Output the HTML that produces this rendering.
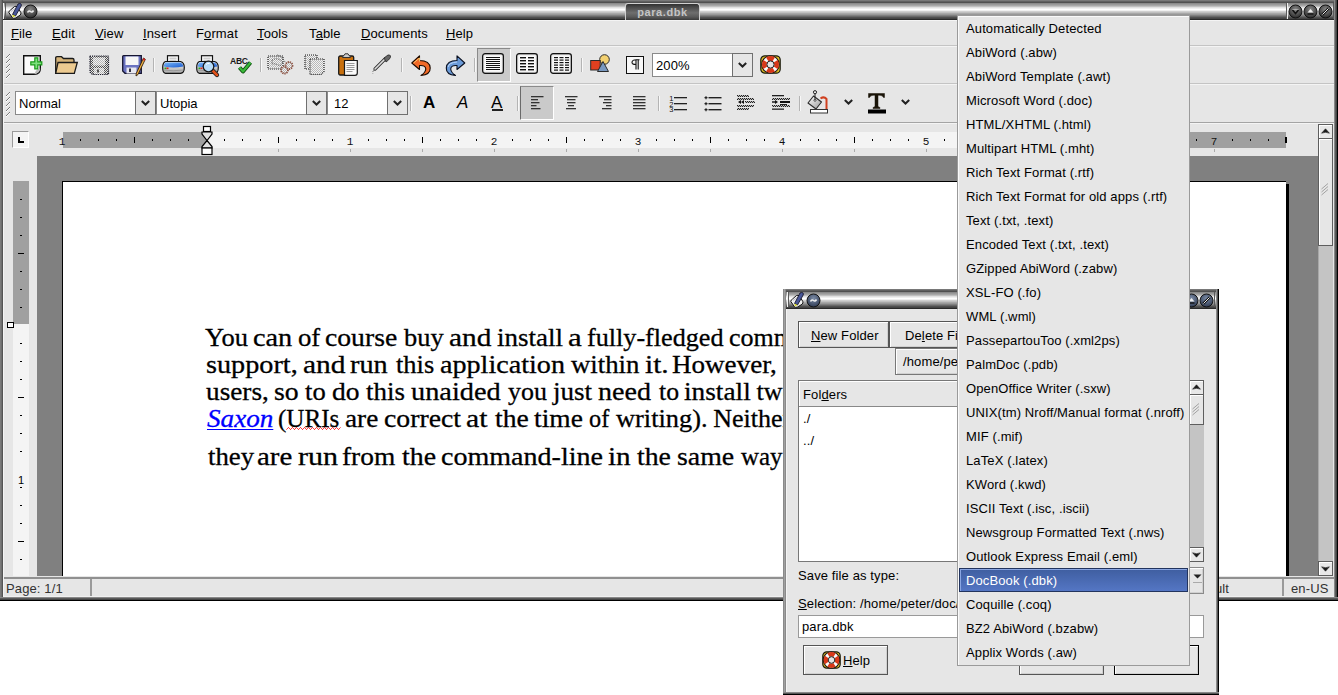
<!DOCTYPE html>
<html><head><meta charset="utf-8">
<style>
*{box-sizing:border-box}
html,body{margin:0;padding:0}
body{width:1338px;height:695px;background:#fff;position:relative;overflow:hidden;font-family:"Liberation Sans",sans-serif;font-size:13px;color:#000}
.a{position:absolute}
.t{white-space:nowrap;line-height:15px;letter-spacing:0.12px}
.u{text-decoration:underline;text-underline-offset:1px;text-decoration-thickness:1px}
.dw{position:absolute;white-space:nowrap;font-family:"Liberation Serif",serif;font-size:26px;line-height:30px;-webkit-text-stroke:0.3px currentColor}
svg{overflow:visible}
</style></head><body>

<div class="a" style="left:0px;top:0px;width:1338px;height:600px;background:#e6e6e6"></div>
<div class="a" style="left:0px;top:0px;width:1338px;height:20px;background:linear-gradient(to bottom,#787878 0.5px,#606060 1.5px,#505050 2.5px,#8a8a8a 3.5px,#9a9a9a 4.5px,#a8a8a8 5.5px,#c0c0c0 6.5px,#e0e0e0 7.5px,#f0f0f0 8.5px,#fff 9.5px,#f0f0f0 10.5px,#d0d0d0 11.5px,#c0c0c0 12.5px,#a8a8a8 13.5px,#989898 14.5px,#808080 15.5px,#686868 16.5px,#505050 17.5px,#444 18.5px,#2a2a2a 19.5px)"></div>
<div class="a" style="left:3px;top:3px;width:1px;height:16px;background:#f4f4f4"></div>
<div class="a" style="left:5px;top:3px;width:1px;height:16px;background:#5a5a5a"></div>
<svg class="a" style="left:8px;top:3px;" width="14" height="16" viewBox="0 0 14 16"><path d="M0.8 9.5 Q0.8 8 2.5 7 L6.5 3.5 Q8 2.8 9.5 4 L12.8 9.5 Q13.5 11 12 12.3 L7.5 15 Q5.5 16 4.3 14.5 Z" fill="#f0f0f0" stroke="#111" stroke-width="1"/>
<path d="M3 8.5 L7 5.5" stroke="#aab" stroke-width="0.7"/>
<path d="M4.5 11.5 L10 1 Q11.5 0 12.8 0.8 Q13.8 1.8 13.2 3 L7.5 13 Z" fill="#4a5898" stroke="#0a0a20" stroke-width="0.8"/>
<path d="M4.5 11.5 L7.5 13 L4.8 14.5 Z" fill="#d8d820"/></svg>
<svg class="a" style="left:23px;top:4px;" width="15" height="15" viewBox="0 0 15 15"><defs><radialGradient id="g3011" cx="0.5" cy="0.35" r="0.65"><stop offset="0" stop-color="#8a8a8a"/><stop offset="1" stop-color="#2a2a2a"/></radialGradient></defs><circle cx="7.5" cy="7.5" r="6.5" fill="url(#g3011)" stroke="#111" stroke-width="1"/><path d="M4.5 8.5 Q6 6 7.5 7.5 Q9 9 10.5 6.5" fill="none" stroke="#eee" stroke-width="1.6"/></svg>
<div class="a" style="left:625px;top:3px;width:75px;height:17px;border:1px solid #d0d0d0;border-bottom:none;border-radius:3px 3px 0 0;background:linear-gradient(to bottom,#303030,#4a4a4a 20%,#6e6e6e 55%,#5a5a5a 80%,#3a3a3a)"></div>
<div class="a" style="left:625px;top:5px;width:75px;text-align:center;color:#c4c4c4;font-weight:bold;font-size:11px;line-height:15px;letter-spacing:0.6px">para.dbk</div>
<div class="a" style="left:1286px;top:3px;width:1px;height:16px;background:#5a5a5a"></div>
<div class="a" style="left:1287px;top:3px;width:1px;height:16px;background:#f0f0f0"></div>
<div class="a" style="left:1333px;top:3px;width:1px;height:16px;background:#5a5a5a"></div>
<svg class="a" style="left:1288px;top:4px;" width="15" height="15" viewBox="0 0 15 15"><defs><radialGradient id="g129511" cx="0.5" cy="0.35" r="0.65"><stop offset="0" stop-color="#8a8a8a"/><stop offset="1" stop-color="#2a2a2a"/></radialGradient></defs><circle cx="7.5" cy="7.5" r="6.5" fill="url(#g129511)" stroke="#111" stroke-width="1"/><path d="M4.5 6 L7.5 9.5 L10.5 6" fill="none" stroke="#111" stroke-width="1.6"/><path d="M4.5 5.5 L10.5 5.5" stroke="#ccc" stroke-width="0.6"/></svg>
<svg class="a" style="left:1303px;top:4px;" width="15" height="15" viewBox="0 0 15 15"><defs><radialGradient id="g131011" cx="0.5" cy="0.35" r="0.65"><stop offset="0" stop-color="#8a8a8a"/><stop offset="1" stop-color="#2a2a2a"/></radialGradient></defs><circle cx="7.5" cy="7.5" r="6.5" fill="url(#g131011)" stroke="#111" stroke-width="1"/><path d="M4.5 8.5 L7.5 5 L10.5 8.5 Z" fill="#eee"/><path d="M4.5 10 L10.5 10" stroke="#111" stroke-width="1.4"/></svg>
<svg class="a" style="left:1318px;top:4px;" width="15" height="15" viewBox="0 0 15 15"><defs><radialGradient id="g132511" cx="0.5" cy="0.35" r="0.65"><stop offset="0" stop-color="#8a8a8a"/><stop offset="1" stop-color="#2a2a2a"/></radialGradient></defs><circle cx="7.5" cy="7.5" r="6.5" fill="url(#g132511)" stroke="#111" stroke-width="1"/><path d="M4.3 10.7 L10.7 4.3" stroke="#111" stroke-width="2.4"/><path d="M4.5 10.5 L10.5 4.5" stroke="#eee" stroke-width="1"/></svg>
<div class="a" style="left:3px;top:20px;width:1331px;height:1px;background:#f4f4f4"></div>
<div class="a" style="left:3px;top:45px;width:1331px;height:1px;background:#c4c4c4"></div>
<div class="a" style="left:3px;top:46px;width:1331px;height:1px;background:#f4f4f4"></div>
<div class="a t" style="left:11px;top:26px;"><span class="u">F</span>ile</div>
<div class="a t" style="left:52px;top:26px;"><span class="u">E</span>dit</div>
<div class="a t" style="left:95px;top:26px;"><span class="u">V</span>iew</div>
<div class="a t" style="left:143px;top:26px;"><span class="u">I</span>nsert</div>
<div class="a t" style="left:196px;top:26px;">F<span class="u">o</span>rmat</div>
<div class="a t" style="left:257px;top:26px;"><span class="u">T</span>ools</div>
<div class="a t" style="left:309px;top:26px;">T<span class="u">a</span>ble</div>
<div class="a t" style="left:361px;top:26px;"><span class="u">D</span>ocuments</div>
<div class="a t" style="left:446px;top:26px;"><span class="u">H</span>elp</div>
<div class="a" style="left:3px;top:83px;width:1331px;height:1px;background:#c4c4c4"></div>
<div class="a" style="left:3px;top:84px;width:1331px;height:1px;background:#f4f4f4"></div>
<div class="a" style="left:3px;top:122px;width:1331px;height:1px;background:#a4a4a4"></div>
<div class="a" style="left:3px;top:123px;width:1331px;height:1px;background:#f4f4f4"></div>
<svg class="a" style="left:6px;top:54px;" width="4" height="25" viewBox="0 0 4 25"><rect x="3" y="0" width="1" height="1" transform="translate(0,0)" fill="#7a7a7a"/><rect x="3" y="1" width="1" height="1" transform="translate(0,0)" fill="#fff"/><rect x="2" y="1" width="1" height="1" transform="translate(0,0)" fill="#7a7a7a"/><rect x="2" y="2" width="1" height="1" transform="translate(0,0)" fill="#fff"/><rect x="1" y="2" width="1" height="1" transform="translate(0,0)" fill="#7a7a7a"/><rect x="1" y="3" width="1" height="1" transform="translate(0,0)" fill="#fff"/><rect x="0" y="3" width="1" height="1" transform="translate(0,0)" fill="#7a7a7a"/><rect x="0" y="4" width="1" height="1" transform="translate(0,0)" fill="#fff"/><rect x="3" y="0" width="1" height="1" transform="translate(0,5)" fill="#7a7a7a"/><rect x="3" y="1" width="1" height="1" transform="translate(0,5)" fill="#fff"/><rect x="2" y="1" width="1" height="1" transform="translate(0,5)" fill="#7a7a7a"/><rect x="2" y="2" width="1" height="1" transform="translate(0,5)" fill="#fff"/><rect x="1" y="2" width="1" height="1" transform="translate(0,5)" fill="#7a7a7a"/><rect x="1" y="3" width="1" height="1" transform="translate(0,5)" fill="#fff"/><rect x="0" y="3" width="1" height="1" transform="translate(0,5)" fill="#7a7a7a"/><rect x="0" y="4" width="1" height="1" transform="translate(0,5)" fill="#fff"/><rect x="3" y="0" width="1" height="1" transform="translate(0,10)" fill="#7a7a7a"/><rect x="3" y="1" width="1" height="1" transform="translate(0,10)" fill="#fff"/><rect x="2" y="1" width="1" height="1" transform="translate(0,10)" fill="#7a7a7a"/><rect x="2" y="2" width="1" height="1" transform="translate(0,10)" fill="#fff"/><rect x="1" y="2" width="1" height="1" transform="translate(0,10)" fill="#7a7a7a"/><rect x="1" y="3" width="1" height="1" transform="translate(0,10)" fill="#fff"/><rect x="0" y="3" width="1" height="1" transform="translate(0,10)" fill="#7a7a7a"/><rect x="0" y="4" width="1" height="1" transform="translate(0,10)" fill="#fff"/><rect x="3" y="0" width="1" height="1" transform="translate(0,15)" fill="#7a7a7a"/><rect x="3" y="1" width="1" height="1" transform="translate(0,15)" fill="#fff"/><rect x="2" y="1" width="1" height="1" transform="translate(0,15)" fill="#7a7a7a"/><rect x="2" y="2" width="1" height="1" transform="translate(0,15)" fill="#fff"/><rect x="1" y="2" width="1" height="1" transform="translate(0,15)" fill="#7a7a7a"/><rect x="1" y="3" width="1" height="1" transform="translate(0,15)" fill="#fff"/><rect x="0" y="3" width="1" height="1" transform="translate(0,15)" fill="#7a7a7a"/><rect x="0" y="4" width="1" height="1" transform="translate(0,15)" fill="#fff"/><rect x="3" y="0" width="1" height="1" transform="translate(0,20)" fill="#7a7a7a"/><rect x="3" y="1" width="1" height="1" transform="translate(0,20)" fill="#fff"/><rect x="2" y="1" width="1" height="1" transform="translate(0,20)" fill="#7a7a7a"/><rect x="2" y="2" width="1" height="1" transform="translate(0,20)" fill="#fff"/><rect x="1" y="2" width="1" height="1" transform="translate(0,20)" fill="#7a7a7a"/><rect x="1" y="3" width="1" height="1" transform="translate(0,20)" fill="#fff"/><rect x="0" y="3" width="1" height="1" transform="translate(0,20)" fill="#7a7a7a"/><rect x="0" y="4" width="1" height="1" transform="translate(0,20)" fill="#fff"/></svg>
<svg class="a" style="left:6px;top:92px;" width="4" height="25" viewBox="0 0 4 25"><rect x="3" y="0" width="1" height="1" transform="translate(0,0)" fill="#7a7a7a"/><rect x="3" y="1" width="1" height="1" transform="translate(0,0)" fill="#fff"/><rect x="2" y="1" width="1" height="1" transform="translate(0,0)" fill="#7a7a7a"/><rect x="2" y="2" width="1" height="1" transform="translate(0,0)" fill="#fff"/><rect x="1" y="2" width="1" height="1" transform="translate(0,0)" fill="#7a7a7a"/><rect x="1" y="3" width="1" height="1" transform="translate(0,0)" fill="#fff"/><rect x="0" y="3" width="1" height="1" transform="translate(0,0)" fill="#7a7a7a"/><rect x="0" y="4" width="1" height="1" transform="translate(0,0)" fill="#fff"/><rect x="3" y="0" width="1" height="1" transform="translate(0,5)" fill="#7a7a7a"/><rect x="3" y="1" width="1" height="1" transform="translate(0,5)" fill="#fff"/><rect x="2" y="1" width="1" height="1" transform="translate(0,5)" fill="#7a7a7a"/><rect x="2" y="2" width="1" height="1" transform="translate(0,5)" fill="#fff"/><rect x="1" y="2" width="1" height="1" transform="translate(0,5)" fill="#7a7a7a"/><rect x="1" y="3" width="1" height="1" transform="translate(0,5)" fill="#fff"/><rect x="0" y="3" width="1" height="1" transform="translate(0,5)" fill="#7a7a7a"/><rect x="0" y="4" width="1" height="1" transform="translate(0,5)" fill="#fff"/><rect x="3" y="0" width="1" height="1" transform="translate(0,10)" fill="#7a7a7a"/><rect x="3" y="1" width="1" height="1" transform="translate(0,10)" fill="#fff"/><rect x="2" y="1" width="1" height="1" transform="translate(0,10)" fill="#7a7a7a"/><rect x="2" y="2" width="1" height="1" transform="translate(0,10)" fill="#fff"/><rect x="1" y="2" width="1" height="1" transform="translate(0,10)" fill="#7a7a7a"/><rect x="1" y="3" width="1" height="1" transform="translate(0,10)" fill="#fff"/><rect x="0" y="3" width="1" height="1" transform="translate(0,10)" fill="#7a7a7a"/><rect x="0" y="4" width="1" height="1" transform="translate(0,10)" fill="#fff"/><rect x="3" y="0" width="1" height="1" transform="translate(0,15)" fill="#7a7a7a"/><rect x="3" y="1" width="1" height="1" transform="translate(0,15)" fill="#fff"/><rect x="2" y="1" width="1" height="1" transform="translate(0,15)" fill="#7a7a7a"/><rect x="2" y="2" width="1" height="1" transform="translate(0,15)" fill="#fff"/><rect x="1" y="2" width="1" height="1" transform="translate(0,15)" fill="#7a7a7a"/><rect x="1" y="3" width="1" height="1" transform="translate(0,15)" fill="#fff"/><rect x="0" y="3" width="1" height="1" transform="translate(0,15)" fill="#7a7a7a"/><rect x="0" y="4" width="1" height="1" transform="translate(0,15)" fill="#fff"/><rect x="3" y="0" width="1" height="1" transform="translate(0,20)" fill="#7a7a7a"/><rect x="3" y="1" width="1" height="1" transform="translate(0,20)" fill="#fff"/><rect x="2" y="1" width="1" height="1" transform="translate(0,20)" fill="#7a7a7a"/><rect x="2" y="2" width="1" height="1" transform="translate(0,20)" fill="#fff"/><rect x="1" y="2" width="1" height="1" transform="translate(0,20)" fill="#7a7a7a"/><rect x="1" y="3" width="1" height="1" transform="translate(0,20)" fill="#fff"/><rect x="0" y="3" width="1" height="1" transform="translate(0,20)" fill="#7a7a7a"/><rect x="0" y="4" width="1" height="1" transform="translate(0,20)" fill="#fff"/></svg>
<svg class="a" style="left:0;top:0" width="0" height="0"><defs><pattern id="dith" width="2" height="2" patternUnits="userSpaceOnUse"><rect width="1" height="1" fill="#3a3a50"/><rect x="1" y="1" width="1" height="1" fill="#3a3a50"/><rect x="1" width="1" height="1" fill="#f0f0f0"/><rect y="1" width="1" height="1" fill="#f0f0f0"/></pattern><pattern id="dith2" width="2" height="2" patternUnits="userSpaceOnUse"><rect width="1" height="1" fill="#505050"/><rect x="1" y="1" width="1" height="1" fill="#505050"/><rect x="1" width="1" height="1" fill="#e8e8e8"/><rect y="1" width="1" height="1" fill="#e8e8e8"/></pattern><pattern id="dk" width="2" height="2" patternUnits="userSpaceOnUse"><rect width="1" height="1" fill="#222"/><rect x="1" y="1" width="1" height="1" fill="#222"/><rect x="1" width="1" height="1" fill="#bbb"/><rect y="1" width="1" height="1" fill="#bbb"/></pattern><pattern id="dl" width="2" height="2" patternUnits="userSpaceOnUse"><rect width="2" height="2" fill="#f2f2f2"/><rect width="1" height="1" fill="#b8b8b8"/><rect x="1" y="1" width="1" height="1" fill="#b8b8b8"/></pattern></defs></svg>
<svg class="a" style="left:23px;top:55px;" width="20" height="20" viewBox="0 0 20 20"><path d="M0.7 0.7 H17.3 V13.5 Q17.3 19.3 11.5 19.3 H0.7 Z" fill="#fbfbfb" stroke="#111" stroke-width="1.4"/>
<path d="M17.3 13.5 Q13 13.8 11.5 19.3 Q16.5 18 17.3 13.5Z" fill="#bdbdbd"/>
<path d="M11.8 2.8 h3 v4 h4 v3 h-4 v4 h-3 v-4 h-4 v-3 h4 Z" fill="#7ee07e" stroke="#1a9a1a" stroke-width="1.2"/></svg>
<svg class="a" style="left:55px;top:56px;" width="23" height="18" viewBox="0 0 23 18"><path d="M0.7 2 Q0.7 0.7 2 0.7 H6.5 L8.5 2.5 H17.5 Q19 2.5 19 4 V17.3 H0.7 Z" fill="#d6b47a" stroke="#1a1a1a" stroke-width="1.3"/>
<path d="M3 6.5 H22.3 L19.3 17.3 H0.7 Z" fill="#ecca90" stroke="#1a1a1a" stroke-width="1.3"/></svg>
<svg class="a" style="left:89px;top:55px;" width="21" height="20" viewBox="0 0 21 20"><path d="M1 1.5 Q1 1 1.5 1 H19 Q19.5 1 19.5 1.5 V19 Q19.5 19.5 19 19.5 H3.5 L1 17 Z" fill="url(#dith2)" stroke="#1a1a2a" stroke-width="1.2" stroke-dasharray="1.2 1"/><rect x="4" y="2.5" width="12" height="8" fill="url(#dl)"/><rect x="5" y="13" width="10" height="6" fill="url(#dl)"/><rect x="8" y="14.5" width="2" height="3" fill="#555"/></svg>
<svg class="a" style="left:122px;top:55px;" width="24" height="22" viewBox="0 0 24 22"><path d="M0.7 1.5 Q0.7 0.7 1.5 0.7 H19.3 V18.3 H3 L0.7 16 Z" fill="#6a72c0" stroke="#151530" stroke-width="1.3"/>
<rect x="3.5" y="1.5" width="13" height="8.5" fill="#f6f6f6"/>
<rect x="4.5" y="12.5" width="10" height="6" fill="#e8e8f0"/><rect x="7" y="13.5" width="2" height="3.5" fill="#334"/>
<path d="M21.5 3 L23.3 4.3 L16 19.5 L14 21 L14.3 18.3 Z" fill="#f0b040" stroke="#302010" stroke-width="0.9"/>
<path d="M21.5 3 L23.3 4.3 L22.5 6 L20.6 4.8Z" fill="#d02020"/></svg>
<div class="a" style="left:153px;top:58px;width:1px;height:14px;background:#b4b4b4"></div>
<div class="a" style="left:154px;top:58px;width:1px;height:14px;background:#f8f8f8"></div>
<svg class="a" style="left:162px;top:55px;" width="23" height="19" viewBox="0 0 23 19"><defs><linearGradient id="pb" x1="0" y1="0" x2="0" y2="1"><stop offset="0" stop-color="#f4f4f4"/><stop offset="1" stop-color="#a8a8a8"/></linearGradient><linearGradient id="pbl" x1="0" y1="0" x2="1" y2="1"><stop offset="0" stop-color="#7ab8f8"/><stop offset="1" stop-color="#1a5ad0"/></linearGradient></defs><rect x="5.5" y="0.7" width="11" height="8" fill="#fafafa" stroke="#111" stroke-width="1.2"/><path d="M7.5 3.2 h7 M7.5 5.2 h7" stroke="#aaa" stroke-width="0.8"/><path d="M3.5 6.5 H18.5 Q22.3 7.5 22.3 12.5 Q22.3 18.3 18.5 18.3 H3.5 Q0.7 18.3 0.7 12.5 Q0.7 7.5 3.5 6.5 Z" fill="url(#pb)" stroke="#111" stroke-width="1.2"/><path d="M3.5 7.5 H18.5 Q21 8.5 21.3 11.5 Q11 13.5 1.7 11.5 Q2 8.5 3.5 7.5Z" fill="url(#pbl)"/><path d="M1.5 15 Q11 16.5 21.5 15" stroke="#888" stroke-width="0.7" fill="none"/><rect x="2.5" y="12.5" width="2" height="1.6" fill="#2a2"/><rect x="4.5" y="12.5" width="2" height="1.6" fill="#d22"/></svg>
<svg class="a" style="left:196px;top:55px;" width="24" height="22" viewBox="0 0 24 22"><rect x="5.5" y="0.7" width="11" height="8" fill="#fafafa" stroke="#111" stroke-width="1.2"/><path d="M7.5 3.2 h7 M7.5 5.2 h7" stroke="#aaa" stroke-width="0.8"/><path d="M3.5 6.5 H18.5 Q22.3 7.5 22.3 12.5 Q22.3 18.3 18.5 18.3 H3.5 Q0.7 18.3 0.7 12.5 Q0.7 7.5 3.5 6.5 Z" fill="url(#pb)" stroke="#111" stroke-width="1.2"/><path d="M3.5 7.5 H18.5 Q21 8.5 21.3 11.5 Q11 13.5 1.7 11.5 Q2 8.5 3.5 7.5Z" fill="url(#pbl)"/><path d="M1.5 15 Q11 16.5 21.5 15" stroke="#888" stroke-width="0.7" fill="none"/><rect x="2.5" y="12.5" width="2" height="1.6" fill="#2a2"/><rect x="4.5" y="12.5" width="2" height="1.6" fill="#d22"/><path d="M15.5 14.5 L21 20" stroke="#1a1a1a" stroke-width="4.2" stroke-linecap="round"/><path d="M15.5 14.5 L21 20" stroke="#e05018" stroke-width="2.6" stroke-linecap="round"/><circle cx="12.5" cy="11.5" r="5.3" fill="#b8dcf8" stroke="#1a1a1a" stroke-width="1.3"/><path d="M10 9.5 Q11.5 8 13.5 8.5" stroke="#fff" stroke-width="1" fill="none"/></svg>
<svg class="a" style="left:230px;top:56px;" width="18" height="9" viewBox="0 0 18 9"><text x="0" y="7.5" font-family="Liberation Sans" font-size="8.6" font-weight="bold" letter-spacing="-0.3" fill="#1a1a1a">ABC</text></svg>
<svg class="a" style="left:238px;top:61px;" width="14" height="13" viewBox="0 0 14 13"><path d="M1.5 6.5 L5 10.5 L12.5 1.5" fill="none" stroke="#0a4a0a" stroke-width="4" stroke-linejoin="round"/><path d="M1.5 6.5 L5 10.5 L12.5 1.5" fill="none" stroke="#3ab83a" stroke-width="2.2" stroke-linejoin="round"/></svg>
<div class="a" style="left:260px;top:58px;width:1px;height:14px;background:#b4b4b4"></div>
<div class="a" style="left:261px;top:58px;width:1px;height:14px;background:#f8f8f8"></div>
<svg class="a" style="left:267px;top:54px;" width="26" height="21" viewBox="0 0 26 21"><rect x="1" y="2" width="15" height="13" fill="url(#dl)" stroke="#222" stroke-width="1.2" stroke-dasharray="1 1"/><path d="M5 6 Q11 3 16 8 L13 12 Q8 9 5 10Z" fill="url(#dl)" stroke="#444" stroke-width="0.9" stroke-dasharray="1 1"/><path d="M10 1 Q15 2 18 8" fill="none" stroke="#555" stroke-width="1" stroke-dasharray="1 1"/><circle cx="17.5" cy="16" r="3.5" fill="url(#dl)" stroke="#8a5040" stroke-width="1.8" stroke-dasharray="1.3 0.8"/><circle cx="22" cy="11.5" r="3.5" fill="url(#dl)" stroke="#8a5040" stroke-width="1.8" stroke-dasharray="1.3 0.8"/></svg>
<svg class="a" style="left:304px;top:54px;" width="21" height="21" viewBox="0 0 21 21"><rect x="1" y="1" width="12" height="14" fill="url(#dl)" stroke="#222" stroke-width="1.2" stroke-dasharray="1 1"/><path d="M6 5 H20 V17.5 L17 20.5 H6 Z" fill="url(#dl)" stroke="#222" stroke-width="1.2" stroke-dasharray="1 1"/></svg>
<svg class="a" style="left:338px;top:53px;" width="21" height="24" viewBox="0 0 21 24"><rect x="0.7" y="3" width="15" height="19" rx="1.5" fill="#c8700e" stroke="#1a1a1a" stroke-width="1.3"/>
<path d="M4.5 4.5 Q4.5 2.5 6 2.5 L7 0.8 H10 L11 2.5 Q12.5 2.5 12.5 4.5 Z" fill="#ccc" stroke="#333" stroke-width="1"/>
<path d="M6.5 7.5 H19.3 V20 Q19.3 22.3 17 22.3 H6.5 Z" fill="#fafafa" stroke="#1a1a1a" stroke-width="1.2"/>
<rect x="8.5" y="10" width="8" height="1" fill="#9a9a9a"/><rect x="8.5" y="12" width="8" height="1" fill="#9a9a9a"/><rect x="8.5" y="14" width="8" height="1" fill="#9a9a9a"/><rect x="8.5" y="16" width="8" height="1" fill="#9a9a9a"/><rect x="8.5" y="18" width="6" height="1" fill="#9a9a9a"/></svg>
<svg class="a" style="left:372px;top:54px;" width="20" height="21" viewBox="0 0 20 21"><path d="M3 15 L13 5" stroke="#333" stroke-width="3.2" stroke-linecap="round"/>
<path d="M3 15 L13 5" stroke="#ddd" stroke-width="1.6" stroke-linecap="round"/>
<path d="M12 4 L16 1 Q18 0.5 18.5 2 Q19 3.5 16.5 6 L14 8Z" fill="#666" stroke="#222" stroke-width="0.8"/>
<path d="M1 17 L3 15 M1 17 L0.8 19.5" stroke="#777" stroke-width="1" stroke-dasharray="1 1"/></svg>
<div class="a" style="left:401px;top:58px;width:1px;height:14px;background:#b4b4b4"></div>
<div class="a" style="left:402px;top:58px;width:1px;height:14px;background:#f8f8f8"></div>
<svg class="a" style="left:411px;top:55px;" width="20" height="22" viewBox="0 0 20 22"><path d="M8.5 0.8 L0.8 8 L8.5 14.5 V10.5 Q14.5 10 14.8 14 Q14.5 17.5 10 20.5 Q19.5 19.5 19.2 13 Q18.8 5.5 8.5 5.5 Z" fill="#f26a28" stroke="#1a0a00" stroke-width="1.1" stroke-linejoin="round"/>
<path d="M2.5 8 L8.5 3 V6.5" fill="none" stroke="#ffd070" stroke-width="0.9"/></svg>
<svg class="a" style="left:445px;top:55px;" width="21" height="22" viewBox="0 0 21 22"><path d="M12 0.8 L19.8 8 L12 14.5 V10.5 Q6 10 5.7 14 Q6 17.5 10.5 20.5 Q1 19.5 1.3 13 Q1.7 5.5 12 5.5 Z" fill="#6a9ad8" stroke="#0a1020" stroke-width="1.1" stroke-linejoin="round"/>
<path d="M3 12 Q4 7.5 12 7" fill="none" stroke="#c8e0ff" stroke-width="0.9"/></svg>
<div class="a" style="left:474px;top:58px;width:1px;height:14px;background:#b4b4b4"></div>
<div class="a" style="left:475px;top:58px;width:1px;height:14px;background:#f8f8f8"></div>
<div class="a" style="left:477px;top:48px;width:34px;height:34px;background:#cacaca;border:1px solid;border-color:#8a8a8a #fff #fff #8a8a8a"></div>
<svg class="a" style="left:482px;top:53px;" width="22" height="21" viewBox="0 0 22 21"><rect x="0.7" y="0.7" width="20.6" height="19.6" rx="2.5" fill="#fafafa" stroke="#111" stroke-width="1.4"/><rect x="2" y="2" width="18" height="17" fill="none" stroke="#ddd" stroke-width="0.6"/><rect x="4" y="4" width="14" height="1" fill="#111"/><rect x="4" y="6" width="14" height="1" fill="#111"/><rect x="4" y="8" width="14" height="1" fill="#111"/><rect x="4" y="10" width="14" height="1" fill="#111"/><rect x="4" y="12" width="14" height="1" fill="#111"/><rect x="4" y="14" width="14" height="1" fill="#111"/><rect x="4" y="16" width="14" height="1" fill="#111"/></svg>
<svg class="a" style="left:516px;top:53px;" width="22" height="21" viewBox="0 0 22 21"><rect x="0.7" y="0.7" width="20.6" height="19.6" rx="2.5" fill="#fafafa" stroke="#111" stroke-width="1.4"/><rect x="2" y="2" width="18" height="17" fill="none" stroke="#ddd" stroke-width="0.6"/><rect x="4" y="4" width="6" height="1.4" fill="#111"/><rect x="12" y="4" width="6" height="1.4" fill="#111"/><rect x="4" y="7" width="6" height="1.4" fill="#111"/><rect x="12" y="7" width="6" height="1.4" fill="#111"/><rect x="4" y="10" width="6" height="1.4" fill="#111"/><rect x="12" y="10" width="6" height="1.4" fill="#111"/><rect x="4" y="13" width="6" height="1.4" fill="#111"/><rect x="12" y="13" width="6" height="1.4" fill="#111"/><rect x="4" y="16" width="6" height="1.4" fill="#111"/><rect x="12" y="16" width="6" height="1.4" fill="#111"/></svg>
<svg class="a" style="left:550px;top:53px;" width="22" height="21" viewBox="0 0 22 21"><rect x="0.7" y="0.7" width="20.6" height="19.6" rx="2.5" fill="#fafafa" stroke="#111" stroke-width="1.4"/><rect x="2" y="2" width="18" height="17" fill="none" stroke="#ddd" stroke-width="0.6"/><rect x="4" y="4.0" width="4" height="1.2" fill="#111"/><rect x="9.5" y="4.0" width="4" height="1.2" fill="#111"/><rect x="15" y="4.0" width="4" height="1.2" fill="#111"/><rect x="4" y="6.5" width="4" height="1.2" fill="#111"/><rect x="9.5" y="6.5" width="4" height="1.2" fill="#111"/><rect x="15" y="6.5" width="4" height="1.2" fill="#111"/><rect x="4" y="9.0" width="4" height="1.2" fill="#111"/><rect x="9.5" y="9.0" width="4" height="1.2" fill="#111"/><rect x="15" y="9.0" width="4" height="1.2" fill="#111"/><rect x="4" y="11.5" width="4" height="1.2" fill="#111"/><rect x="9.5" y="11.5" width="4" height="1.2" fill="#111"/><rect x="15" y="11.5" width="4" height="1.2" fill="#111"/><rect x="4" y="14.0" width="4" height="1.2" fill="#111"/><rect x="9.5" y="14.0" width="4" height="1.2" fill="#111"/><rect x="15" y="14.0" width="4" height="1.2" fill="#111"/><rect x="4" y="16.5" width="4" height="1.2" fill="#111"/><rect x="9.5" y="16.5" width="4" height="1.2" fill="#111"/><rect x="15" y="16.5" width="4" height="1.2" fill="#111"/></svg>
<div class="a" style="left:581px;top:58px;width:1px;height:14px;background:#b4b4b4"></div>
<div class="a" style="left:582px;top:58px;width:1px;height:14px;background:#f8f8f8"></div>
<svg class="a" style="left:590px;top:54px;" width="21" height="19" viewBox="0 0 21 19"><circle cx="14.5" cy="5.5" r="4.8" fill="#f2d070" stroke="#2a2a2a" stroke-width="1"/>
<rect x="0.7" y="6.5" width="9.5" height="9.5" fill="#e04020" stroke="#2a2a2a" stroke-width="1"/>
<path d="M13 7.5 L18.5 17.5 H7.5 Z" fill="#7898c0" stroke="#2a2a2a" stroke-width="1"/></svg>
<div class="a" style="left:626px;top:56px;width:18px;height:18px;border:1px solid #111;background:#f8f8f8"></div>
<svg class="a" style="left:631px;top:59px;" width="9" height="11" viewBox="0 0 9 11"><path d="M4.5 0.8 H8.5 M5 0.8 V10.5 M7.2 0.8 V10.5 M5 0.8 Q1 1 1 3.5 Q1 5.5 5 5.5" fill="none" stroke="#111" stroke-width="1.1"/></svg>
<div class="a" style="left:652px;top:53px;width:81px;height:24px;background:#fff;border:1px solid #8a8a8a;border-right:none"></div>
<div class="a" style="left:732px;top:53px;width:21px;height:24px;background:#e6e6e6;border:1px solid #707070"></div>
<div class="a t" style="left:656px;top:58px;">200%</div>
<svg class="a" style="left:738px;top:62px;" width="9" height="6" viewBox="0 0 9 6"><path d="M0.8 1 L4.5 4.5 L8.2 1" fill="none" stroke="#222" stroke-width="2"/></svg>
<svg class="a" style="left:760px;top:55px;" width="21" height="19" viewBox="0 0 21 19"><rect x="0.8" y="0.8" width="19.4" height="17.4" rx="4" fill="#e0c020" stroke="#1a1a10" stroke-width="1.2"/><circle cx="10.5" cy="9.5" r="8.8" fill="#fafafa" stroke="#1a1010" stroke-width="1.1"/><path d="M6.05 2.38 A8.4 8.4 0 0 1 14.95 2.38 L12.51 6.28 A3.8 3.8 0 0 0 8.49 6.28 Z" fill="#d83818"/><path d="M17.62 5.05 A8.4 8.4 0 0 1 17.62 13.95 L13.72 11.51 A3.8 3.8 0 0 0 13.72 7.49 Z" fill="#d83818"/><path d="M14.95 16.62 A8.4 8.4 0 0 1 6.05 16.62 L8.49 12.72 A3.8 3.8 0 0 0 12.51 12.72 Z" fill="#d83818"/><path d="M3.38 13.95 A8.4 8.4 0 0 1 3.38 5.05 L7.28 7.49 A3.8 3.8 0 0 0 7.28 11.51 Z" fill="#d83818"/><circle cx="10.5" cy="9.5" r="3.6" fill="#e6e6e6" stroke="#222" stroke-width="1"/></svg>
<div class="a" style="left:15px;top:91px;width:121px;height:24px;background:#fff;border:1px solid #8a8a8a;border-right:none"></div>
<div class="a" style="left:135px;top:91px;width:21px;height:24px;background:#e6e6e6;border:1px solid #707070"></div>
<div class="a t" style="left:19px;top:96px;letter-spacing:0">Normal</div>
<svg class="a" style="left:141px;top:100px;" width="9" height="6" viewBox="0 0 9 6"><path d="M0.8 1 L4.5 4.5 L8.2 1" fill="none" stroke="#222" stroke-width="2"/></svg>
<div class="a" style="left:156px;top:91px;width:151px;height:24px;background:#fff;border:1px solid #8a8a8a;border-right:none"></div>
<div class="a" style="left:306px;top:91px;width:21px;height:24px;background:#e6e6e6;border:1px solid #707070"></div>
<div class="a t" style="left:160px;top:96px;letter-spacing:0">Utopia</div>
<svg class="a" style="left:312px;top:100px;" width="9" height="6" viewBox="0 0 9 6"><path d="M0.8 1 L4.5 4.5 L8.2 1" fill="none" stroke="#222" stroke-width="2"/></svg>
<div class="a" style="left:327px;top:91px;width:61px;height:24px;background:#fff;border:1px solid #8a8a8a;border-right:none"></div>
<div class="a" style="left:387px;top:91px;width:21px;height:24px;background:#e6e6e6;border:1px solid #707070"></div>
<div class="a t" style="left:334px;top:96px;letter-spacing:0">12</div>
<svg class="a" style="left:393px;top:100px;" width="9" height="6" viewBox="0 0 9 6"><path d="M0.8 1 L4.5 4.5 L8.2 1" fill="none" stroke="#222" stroke-width="2"/></svg>
<div class="a" style="left:410px;top:96px;width:1px;height:15px;background:#b4b4b4"></div>
<div class="a" style="left:411px;top:96px;width:1px;height:15px;background:#f8f8f8"></div>
<div class="a" style="left:423px;top:93px;font-size:17px;font-weight:bold;line-height:19px">A</div>
<div class="a" style="left:457px;top:93px;font-size:17px;font-style:italic;line-height:19px">A</div>
<div class="a" style="left:491px;top:93px;font-size:17px;line-height:19px">A</div>
<div class="a" style="left:492px;top:109px;width:11px;height:2px;background:#222"></div>
<div class="a" style="left:517px;top:96px;width:1px;height:15px;background:#b4b4b4"></div>
<div class="a" style="left:518px;top:96px;width:1px;height:15px;background:#f8f8f8"></div>
<div class="a" style="left:520px;top:86px;width:34px;height:34px;background:#cacaca;border:1px solid;border-color:#8a8a8a #fff #fff #6a6a6a"></div>
<svg class="a" style="left:531px;top:96px;" width="14" height="14" viewBox="0 0 14 14"><rect x="0" y="0" width="12.5" height="1.3" fill="#333"/><rect x="0" y="3" width="7" height="1.3" fill="#333"/><rect x="0" y="6" width="8.5" height="1.3" fill="#333"/><rect x="0" y="9" width="5.5" height="1.3" fill="#333"/><rect x="0" y="12" width="9.5" height="1.3" fill="#333"/></svg>
<svg class="a" style="left:565px;top:96px;" width="14" height="14" viewBox="0 0 14 14"><rect x="0" y="0" width="12.5" height="1.3" fill="#333"/><rect x="2" y="3" width="8.5" height="1.3" fill="#333"/><rect x="2" y="6" width="8.5" height="1.3" fill="#333"/><rect x="3" y="9" width="6" height="1.3" fill="#333"/><rect x="1" y="12" width="10" height="1.3" fill="#333"/></svg>
<svg class="a" style="left:599px;top:96px;" width="14" height="14" viewBox="0 0 14 14"><rect x="0" y="0" width="12.5" height="1.3" fill="#333"/><rect x="5" y="3" width="7.5" height="1.3" fill="#333"/><rect x="4" y="6" width="8.5" height="1.3" fill="#333"/><rect x="7" y="9" width="5.5" height="1.3" fill="#333"/><rect x="3" y="12" width="9.5" height="1.3" fill="#333"/></svg>
<svg class="a" style="left:633px;top:96px;" width="14" height="14" viewBox="0 0 14 14"><rect x="0" y="0" width="12.5" height="1.3" fill="#333"/><rect x="0" y="3" width="12.5" height="1.3" fill="#333"/><rect x="0" y="6" width="12.5" height="1.3" fill="#333"/><rect x="0" y="9" width="12.5" height="1.3" fill="#333"/><rect x="0" y="12" width="12.5" height="1.3" fill="#333"/></svg>
<div class="a" style="left:658px;top:96px;width:1px;height:15px;background:#b4b4b4"></div>
<div class="a" style="left:659px;top:96px;width:1px;height:15px;background:#f8f8f8"></div>
<svg class="a" style="left:669px;top:95px;" width="19" height="16" viewBox="0 0 19 16"><text x="0.3" y="6" font-size="7.5" font-family="Liberation Sans" fill="#111">1</text><text x="0.3" y="11.5" font-size="7.5" font-family="Liberation Sans" fill="#111">2</text><text x="0.3" y="17" font-size="7.5" font-family="Liberation Sans" fill="#111">3</text><rect x="5" y="2" width="13" height="1.3" fill="#222"/><rect x="5" y="8" width="13" height="1.3" fill="#222"/><rect x="5" y="14" width="13" height="1.3" fill="#222"/></svg>
<svg class="a" style="left:703px;top:95px;" width="19" height="16" viewBox="0 0 19 16"><path d="M1.5 2.7 h3 M3 1.2 v3" stroke="#222" stroke-width="1.2"/><path d="M1.5 8.7 h3 M3 7.2 v3" stroke="#222" stroke-width="1.2"/><path d="M1.5 14.7 h3 M3 13.2 v3" stroke="#222" stroke-width="1.2"/><rect x="5.5" y="2" width="13" height="1.4" fill="#222"/><rect x="5.5" y="8" width="13" height="1.4" fill="#222"/><rect x="5.5" y="14" width="13" height="1.4" fill="#222"/></svg>
<svg class="a" style="left:737px;top:95px;" width="19" height="16" viewBox="0 0 19 16"><rect x="0" y="0" width="12" height="2" fill="url(#dk)"/><rect x="0" y="3" width="17" height="2" fill="url(#dk)"/><path d="M1 7 L4 5 V9Z M4 7 L7 5 V9Z" fill="#111"/><rect x="8" y="6" width="10" height="2" fill="url(#dk)"/><rect x="0" y="10" width="17" height="2" fill="url(#dk)"/><rect x="0" y="13" width="12" height="2" fill="url(#dk)"/></svg>
<svg class="a" style="left:772px;top:95px;" width="19" height="16" viewBox="0 0 19 16"><rect x="0" y="0" width="12" height="1.3" fill="#222"/><rect x="0" y="3" width="18" height="2" fill="url(#dk)"/><path d="M6 7 L3 5 V9Z" fill="#111"/><rect x="0" y="6.3" width="3" height="1.4" fill="#111"/><rect x="8" y="6" width="10" height="2" fill="#111"/><rect x="8" y="9" width="7" height="1.3" fill="#222"/><rect x="0" y="10" width="18" height="2" fill="url(#dk)"/><rect x="0" y="13.5" width="12" height="1.3" fill="#222"/></svg>
<div class="a" style="left:799px;top:96px;width:1px;height:15px;background:#b4b4b4"></div>
<div class="a" style="left:800px;top:96px;width:1px;height:15px;background:#f8f8f8"></div>
<svg class="a" style="left:807px;top:90px;" width="24" height="24" viewBox="0 0 24 24"><defs><linearGradient id="bk" x1="0" y1="0" x2="1" y2="1"><stop offset="0" stop-color="#fff"/><stop offset="1" stop-color="#9a9a9a"/></linearGradient></defs>
<path d="M6.5 6 L14.5 12 L9 19 L1 13 Z" fill="url(#bk)" stroke="#2a2a2a" stroke-width="1.1" stroke-linejoin="round"/>
<circle cx="8" cy="2.2" r="1.6" fill="none" stroke="#222" stroke-width="1"/>
<path d="M8 3.8 V9.5" stroke="#222" stroke-width="1"/><circle cx="8" cy="10.3" r="1" fill="#fff" stroke="#222" stroke-width="0.8"/>
<path d="M13.5 8.5 Q17 6 19.5 9 V21" fill="none" stroke="#d04020" stroke-width="2"/>
<rect x="3.5" y="19.5" width="17" height="3.5" fill="#fff" stroke="#333" stroke-width="1"/></svg>
<svg class="a" style="left:844px;top:99px;" width="9" height="6" viewBox="0 0 9 6"><path d="M0.8 1 L4.5 4.5 L8.2 1" fill="none" stroke="#222" stroke-width="2"/></svg>
<svg class="a" style="left:867px;top:93px;" width="20" height="21" viewBox="0 0 20 21"><path d="M1.5 0.5 H17.5 V4.5 L16.5 4.5 Q15.5 2.3 13 2.3 H11 V13 Q11 14.3 13 14.5 V15.5 H6 V14.5 Q8 14.3 8 13 V2.3 H6 Q3.5 2.3 2.5 4.5 L1.5 4.5 Z" fill="#1a1408" stroke="#1a1408" stroke-width="0.5"/><rect x="1" y="16.5" width="18" height="4" fill="#000"/></svg>
<svg class="a" style="left:901px;top:99px;" width="9" height="6" viewBox="0 0 9 6"><path d="M0.8 1 L4.5 4.5 L8.2 1" fill="none" stroke="#222" stroke-width="2"/></svg>
<div class="a" style="left:12px;top:131px;width:17px;height:17px;background:#f4f4f4;border:1px solid #9a9a9a;border-right-color:#fff;border-bottom-color:#fff"></div>
<div class="a" style="left:18px;top:137px;width:2px;height:6px;background:#000"></div>
<div class="a" style="left:18px;top:141px;width:6px;height:2px;background:#000"></div>
<div class="a" style="left:63px;top:132px;width:1223px;height:16px;background:#f4f4f4"></div>
<div class="a" style="left:63px;top:132px;width:144px;height:16px;background:#a0a0a0"></div>
<div class="a" style="left:1142px;top:132px;width:144px;height:16px;background:#a0a0a0"></div>
<svg class="a" style="left:0;top:0" width="1338" height="160"><rect x="80" y="139" width="1" height="2" fill="#000"/><rect x="98" y="139" width="1" height="2" fill="#000"/><rect x="116" y="139" width="1" height="2" fill="#000"/><rect x="134" y="137" width="1" height="6" fill="#000"/><rect x="152" y="139" width="1" height="2" fill="#000"/><rect x="170" y="139" width="1" height="2" fill="#000"/><rect x="188" y="139" width="1" height="2" fill="#000"/><rect x="224" y="139" width="1" height="2" fill="#000"/><rect x="242" y="139" width="1" height="2" fill="#000"/><rect x="260" y="139" width="1" height="2" fill="#000"/><rect x="278" y="137" width="1" height="6" fill="#000"/><rect x="278" y="149" width="1" height="3" fill="#aaa"/><rect x="296" y="139" width="1" height="2" fill="#000"/><rect x="314" y="139" width="1" height="2" fill="#000"/><rect x="332" y="139" width="1" height="2" fill="#000"/><rect x="368" y="139" width="1" height="2" fill="#000"/><rect x="386" y="139" width="1" height="2" fill="#000"/><rect x="404" y="139" width="1" height="2" fill="#000"/><rect x="422" y="137" width="1" height="6" fill="#000"/><rect x="422" y="149" width="1" height="3" fill="#aaa"/><rect x="440" y="139" width="1" height="2" fill="#000"/><rect x="458" y="139" width="1" height="2" fill="#000"/><rect x="476" y="139" width="1" height="2" fill="#000"/><rect x="512" y="139" width="1" height="2" fill="#000"/><rect x="530" y="139" width="1" height="2" fill="#000"/><rect x="548" y="139" width="1" height="2" fill="#000"/><rect x="566" y="137" width="1" height="6" fill="#000"/><rect x="566" y="149" width="1" height="3" fill="#aaa"/><rect x="584" y="139" width="1" height="2" fill="#000"/><rect x="602" y="139" width="1" height="2" fill="#000"/><rect x="620" y="139" width="1" height="2" fill="#000"/><rect x="656" y="139" width="1" height="2" fill="#000"/><rect x="674" y="139" width="1" height="2" fill="#000"/><rect x="692" y="139" width="1" height="2" fill="#000"/><rect x="710" y="137" width="1" height="6" fill="#000"/><rect x="710" y="149" width="1" height="3" fill="#aaa"/><rect x="728" y="139" width="1" height="2" fill="#000"/><rect x="746" y="139" width="1" height="2" fill="#000"/><rect x="764" y="139" width="1" height="2" fill="#000"/><rect x="800" y="139" width="1" height="2" fill="#000"/><rect x="818" y="139" width="1" height="2" fill="#000"/><rect x="836" y="139" width="1" height="2" fill="#000"/><rect x="854" y="137" width="1" height="6" fill="#000"/><rect x="854" y="149" width="1" height="3" fill="#aaa"/><rect x="872" y="139" width="1" height="2" fill="#000"/><rect x="890" y="139" width="1" height="2" fill="#000"/><rect x="908" y="139" width="1" height="2" fill="#000"/><rect x="944" y="139" width="1" height="2" fill="#000"/><rect x="962" y="139" width="1" height="2" fill="#000"/><rect x="980" y="139" width="1" height="2" fill="#000"/><rect x="998" y="137" width="1" height="6" fill="#000"/><rect x="998" y="149" width="1" height="3" fill="#aaa"/><rect x="1016" y="139" width="1" height="2" fill="#000"/><rect x="1034" y="139" width="1" height="2" fill="#000"/><rect x="1052" y="139" width="1" height="2" fill="#000"/><rect x="1088" y="139" width="1" height="2" fill="#000"/><rect x="1106" y="139" width="1" height="2" fill="#000"/><rect x="1124" y="139" width="1" height="2" fill="#000"/><rect x="1142" y="137" width="1" height="6" fill="#000"/><rect x="1142" y="149" width="1" height="3" fill="#aaa"/><rect x="1160" y="139" width="1" height="2" fill="#000"/><rect x="1178" y="139" width="1" height="2" fill="#000"/><rect x="1196" y="139" width="1" height="2" fill="#000"/><rect x="1232" y="139" width="1" height="2" fill="#000"/><rect x="1250" y="139" width="1" height="2" fill="#000"/><rect x="1268" y="139" width="1" height="2" fill="#000"/></svg>
<div class="a" style="left:57px;top:136px;width:10px;text-align:center;font-family:'Liberation Mono',monospace;font-size:11px;line-height:12px;color:#111">1</div>
<div class="a" style="left:345px;top:136px;width:10px;text-align:center;font-family:'Liberation Mono',monospace;font-size:11px;line-height:12px;color:#111">1</div>
<div class="a" style="left:350px;top:149px;width:1px;height:3px;background:#aaa"></div>
<div class="a" style="left:489px;top:136px;width:10px;text-align:center;font-family:'Liberation Mono',monospace;font-size:11px;line-height:12px;color:#111">2</div>
<div class="a" style="left:494px;top:149px;width:1px;height:3px;background:#aaa"></div>
<div class="a" style="left:633px;top:136px;width:10px;text-align:center;font-family:'Liberation Mono',monospace;font-size:11px;line-height:12px;color:#111">3</div>
<div class="a" style="left:638px;top:149px;width:1px;height:3px;background:#aaa"></div>
<div class="a" style="left:777px;top:136px;width:10px;text-align:center;font-family:'Liberation Mono',monospace;font-size:11px;line-height:12px;color:#111">4</div>
<div class="a" style="left:782px;top:149px;width:1px;height:3px;background:#aaa"></div>
<div class="a" style="left:921px;top:136px;width:10px;text-align:center;font-family:'Liberation Mono',monospace;font-size:11px;line-height:12px;color:#111">5</div>
<div class="a" style="left:926px;top:149px;width:1px;height:3px;background:#aaa"></div>
<div class="a" style="left:1065px;top:136px;width:10px;text-align:center;font-family:'Liberation Mono',monospace;font-size:11px;line-height:12px;color:#111">6</div>
<div class="a" style="left:1070px;top:149px;width:1px;height:3px;background:#aaa"></div>
<div class="a" style="left:1209px;top:136px;width:10px;text-align:center;font-family:'Liberation Mono',monospace;font-size:11px;line-height:12px;color:#111">7</div>
<div class="a" style="left:1214px;top:149px;width:1px;height:3px;background:#aaa"></div>
<div class="a" style="left:1285px;top:137px;width:2px;height:6px;background:#000"></div>
<svg class="a" style="left:201px;top:126px;" width="12" height="30" viewBox="0 0 12 30"><rect x="2.5" y="0.5" width="7" height="5" fill="#fff" stroke="#000" stroke-width="1.2"/>
<path d="M1 6 H11 V8 L6 14.5 L1 8 Z" fill="#e0e0e0" stroke="#000" stroke-width="1.2"/>
<path d="M1 22 V20.5 L6 14.5 L11 20.5 V22 Z" fill="#e0e0e0" stroke="#000" stroke-width="1.2"/>
<rect x="1" y="22" width="10" height="6.5" fill="#fff" stroke="#000" stroke-width="1.2"/></svg>
<div class="a" style="left:37px;top:156px;width:1281px;height:420px;background:#808080"></div>
<div class="a" style="left:62px;top:181px;width:1227px;height:395px;background:#000"></div>
<div class="a" style="left:63px;top:182px;width:1223px;height:394px;background:#fff"></div>
<div class="a" style="left:1286px;top:181px;width:3px;height:3px;background:#808080"></div>
<div class="a" style="left:13px;top:181px;width:16px;height:395px;background:#f4f4f4"></div>
<div class="a" style="left:13px;top:181px;width:16px;height:143px;background:#a0a0a0"></div>
<svg class="a" style="left:0;top:0" width="40" height="600"><rect x="20" y="199" width="2" height="1" fill="#000"/><rect x="20" y="217" width="2" height="1" fill="#000"/><rect x="20" y="235" width="2" height="1" fill="#000"/><rect x="18" y="253" width="6" height="1" fill="#000"/><rect x="20" y="271" width="2" height="1" fill="#000"/><rect x="20" y="289" width="2" height="1" fill="#000"/><rect x="20" y="307" width="2" height="1" fill="#000"/><rect x="20" y="343" width="2" height="1" fill="#000"/><rect x="20" y="361" width="2" height="1" fill="#000"/><rect x="20" y="379" width="2" height="1" fill="#000"/><rect x="18" y="397" width="6" height="1" fill="#000"/><rect x="20" y="415" width="2" height="1" fill="#000"/><rect x="20" y="433" width="2" height="1" fill="#000"/><rect x="20" y="451" width="2" height="1" fill="#000"/><rect x="20" y="487" width="2" height="1" fill="#000"/><rect x="20" y="505" width="2" height="1" fill="#000"/><rect x="20" y="523" width="2" height="1" fill="#000"/><rect x="18" y="541" width="6" height="1" fill="#000"/><rect x="20" y="559" width="2" height="1" fill="#000"/><rect x="20" y="487" width="2" height="1" fill="#000"/></svg>
<div class="a" style="left:16px;top:474px;width:10px;text-align:center;font-size:11px;line-height:12px">1</div>
<div class="a" style="left:7px;top:322px;width:7px;height:6px;background:#fff;border:1px solid #000"></div>
<div class="a" style="left:1318px;top:124px;width:15px;height:452px;background:#c4c4c4;border-left:1px solid #a8a8a8"></div>
<div class="a" style="left:1318px;top:124px;width:15px;height:15px;background:#e8e8e8;border:1px solid #5e5e5e;box-shadow:inset 1px 1px 0 #fff"></div>
<svg class="a" style="left:1321px;top:128px;" width="9" height="6" viewBox="0 0 9 6"><path d="M0.6 5.2 L4.5 0.8 L8.4 5.2 Q4.5 3.4 0.6 5.2 Z" fill="#1a1a1a" stroke="#1a1a1a" stroke-width="0.6" stroke-linejoin="round"/></svg>
<div class="a" style="left:1318px;top:138px;width:15px;height:108px;background:#e6e6e6;border:1px solid #5e5e5e;box-shadow:inset 1px 1px 0 #fff"></div>
<svg class="a" style="left:1321px;top:183px;" width="9" height="13" viewBox="0 0 9 13"><path d="M0.5 6 L7 0.5 M0.5 9 L7 3.5 M0.5 12 L7 6.5" stroke="#999" stroke-width="0.9"/></svg>
<div class="a" style="left:1318px;top:561px;width:15px;height:15px;background:#e8e8e8;border:1px solid #5e5e5e;box-shadow:inset 1px 1px 0 #fff"></div>
<svg class="a" style="left:1321px;top:566px;" width="9" height="6" viewBox="0 0 9 6"><path d="M0.6 0.8 L4.5 5.2 L8.4 0.8 Q4.5 2.6 0.6 0.8 Z" fill="#1a1a1a" stroke="#1a1a1a" stroke-width="0.6" stroke-linejoin="round"/></svg>
<div class="a" style="left:3px;top:577px;width:1331px;height:2px;background:#909090"></div>
<div class="a" style="left:90px;top:579px;width:2px;height:18px;background:#9a9a9a"></div>
<div class="a" style="left:1282px;top:579px;width:2px;height:18px;background:#9a9a9a"></div>
<div class="a t" style="left:6px;top:581px;color:#333">Page: 1/1</div>
<div class="a t" style="left:1187px;top:581px;color:#333">Default</div>
<div class="a t" style="left:1291px;top:581px;color:#333">en-US</div>
<div class="a" style="left:3px;top:596px;width:1331px;height:1px;background:#f0f0f0"></div>
<div class="a" style="left:0px;top:0px;width:3px;height:601px;background:linear-gradient(to right,#7a7a7a 0.5px,#6e6e6e 1.5px,#555 2.5px)"></div>
<div class="a" style="left:3px;top:20px;width:1px;height:577px;background:#f4f4f4"></div>
<div class="a" style="left:1334px;top:0px;width:4px;height:601px;background:linear-gradient(to right,#888 0.5px,#5a5a5a 1.5px,#444 2.5px,#000 3.5px)"></div>
<div class="a" style="left:0px;top:597px;width:1338px;height:4px;background:linear-gradient(to bottom,#888 0.5px,#5a5a5a 1.5px,#444 2.5px,#000 3.5px)"></div>
<div class="dw" style="left:205.20px;top:323px;transform:scaleX(1.0190);transform-origin:0 0;">You</div>
<div class="dw" style="left:252.71px;top:323px;transform:scaleX(1.0886);transform-origin:0 0;">can</div>
<div class="dw" style="left:297.67px;top:323px;transform:scaleX(1.0286);transform-origin:0 0;">of</div>
<div class="dw" style="left:324.54px;top:323px;transform:scaleX(1.0636);transform-origin:0 0;">course</div>
<div class="dw" style="left:404.20px;top:323px;transform:scaleX(1.0154);transform-origin:0 0;">buy</div>
<div class="dw" style="left:448.67px;top:323px;transform:scaleX(1.1278);transform-origin:0 0;">and</div>
<div class="dw" style="left:496.56px;top:323px;transform:scaleX(1.0371);transform-origin:0 0;">install</div>
<div class="dw" style="left:568.21px;top:323px;transform:scaleX(1.1900);transform-origin:0 0;">a</div>
<div class="dw" style="left:586.79px;top:323px;transform:scaleX(1.0059);transform-origin:0 0;">fully-fledged</div>
<div class="dw" style="left:728.90px;top:323px;transform:scaleX(1.0000);transform-origin:0 0;">commercial</div>
<div class="dw" style="left:205.61px;top:350px;transform:scaleX(1.0854);transform-origin:0 0;">support,</div>
<div class="dw" style="left:302.77px;top:350px;transform:scaleX(1.1333);transform-origin:0 0;">and</div>
<div class="dw" style="left:349.92px;top:350px;transform:scaleX(1.0848);transform-origin:0 0;">run</div>
<div class="dw" style="left:395.70px;top:350px;transform:scaleX(1.0162);transform-origin:0 0;">this</div>
<div class="dw" style="left:439.72px;top:350px;transform:scaleX(1.0816);transform-origin:0 0;">application</div>
<div class="dw" style="left:570.90px;top:350px;transform:scaleX(1.0303);transform-origin:0 0;">within</div>
<div class="dw" style="left:644.77px;top:350px;transform:scaleX(1.1333);transform-origin:0 0;">it.</div>
<div class="dw" style="left:672.36px;top:350px;transform:scaleX(1.0408);transform-origin:0 0;">However,</div>
<div class="dw" style="left:206.15px;top:376.5px;transform:scaleX(1.0483);transform-origin:0 0;">users,</div>
<div class="dw" style="left:274.43px;top:376.5px;transform:scaleX(1.0667);transform-origin:0 0;">so</div>
<div class="dw" style="left:305.40px;top:376.5px;transform:scaleX(1.0211);transform-origin:0 0;">to</div>
<div class="dw" style="left:331.94px;top:376.5px;transform:scaleX(1.0583);transform-origin:0 0;">do</div>
<div class="dw" style="left:365.90px;top:376.5px;transform:scaleX(1.0351);transform-origin:0 0;">this</div>
<div class="dw" style="left:411.31px;top:376.5px;transform:scaleX(1.0889);transform-origin:0 0;">unaided</div>
<div class="dw" style="left:508.10px;top:376.5px;transform:scaleX(0.9974);transform-origin:0 0;">you</div>
<div class="dw" style="left:553.24px;top:376.5px;transform:scaleX(1.0421);transform-origin:0 0;">just</div>
<div class="dw" style="left:597.72px;top:376.5px;transform:scaleX(1.0792);transform-origin:0 0;">need</div>
<div class="dw" style="left:658.50px;top:376.5px;transform:scaleX(0.9895);transform-origin:0 0;">to</div>
<div class="dw" style="left:684.15px;top:376.5px;transform:scaleX(1.0500);transform-origin:0 0;">install</div>
<div class="dw" style="left:756.60px;top:376.5px;transform:scaleX(1.0000);transform-origin:0 0;">two</div>
<div class="dw" style="left:207.00px;top:403.5px;transform:scaleX(1.0435);transform-origin:0 0;font-style:italic;color:#00f;text-decoration:underline;text-decoration-thickness:1px;text-underline-offset:2px">Saxon</div>
<div class="dw" style="left:277.54px;top:403.5px;transform:scaleX(0.9645);transform-origin:0 0;">(URIs</div>
<svg class="a" style="left:286px;top:427px;" width="56" height="3" viewBox="0 0 56 3"><polyline points="0.5,2.5 1.5,1.5 2.5,0.5 3.5,1.5 4.5,2.5 5.5,1.5 6.5,0.5 7.5,1.5 8.5,2.5 9.5,1.5 10.5,0.5 11.5,1.5 12.5,2.5 13.5,1.5 14.5,0.5 15.5,1.5 16.5,2.5 17.5,1.5 18.5,0.5 19.5,1.5 20.5,2.5 21.5,1.5 22.5,0.5 23.5,1.5 24.5,2.5 25.5,1.5 26.5,0.5 27.5,1.5 28.5,2.5 29.5,1.5 30.5,0.5 31.5,1.5 32.5,2.5 33.5,1.5 34.5,0.5 35.5,1.5 36.5,2.5 37.5,1.5 38.5,0.5 39.5,1.5 40.5,2.5 41.5,1.5 42.5,0.5 43.5,1.5 44.5,2.5 45.5,1.5 46.5,0.5 47.5,1.5 48.5,2.5 49.5,1.5 50.5,0.5 51.5,1.5 52.5,2.5 53.5,1.5 54.5,0.5" fill="none" stroke="#ff0000" stroke-width="1"/></svg>
<div class="dw" style="left:344.65px;top:403.5px;transform:scaleX(1.0467);transform-origin:0 0;">are</div>
<div class="dw" style="left:383.53px;top:403.5px;transform:scaleX(1.0662);transform-origin:0 0;">correct</div>
<div class="dw" style="left:465.86px;top:403.5px;transform:scaleX(1.1412);transform-origin:0 0;">at</div>
<div class="dw" style="left:494.60px;top:403.5px;transform:scaleX(1.0613);transform-origin:0 0;">the</div>
<div class="dw" style="left:534.20px;top:403.5px;transform:scaleX(1.0565);transform-origin:0 0;">time</div>
<div class="dw" style="left:589.27px;top:403.5px;transform:scaleX(0.9333);transform-origin:0 0;">of</div>
<div class="dw" style="left:616.10px;top:403.5px;transform:scaleX(1.0146);transform-origin:0 0;">writing).</div>
<div class="dw" style="left:713.20px;top:403.5px;transform:scaleX(1.0000);transform-origin:0 0;">Neither</div>
<div class="dw" style="left:207.50px;top:442px;transform:scaleX(1.0289);transform-origin:0 0;">they</div>
<div class="dw" style="left:257.49px;top:442px;transform:scaleX(1.1100);transform-origin:0 0;">are</div>
<div class="dw" style="left:297.55px;top:442px;transform:scaleX(1.1545);transform-origin:0 0;">run</div>
<div class="dw" style="left:341.65px;top:442px;transform:scaleX(1.0531);transform-origin:0 0;">from</div>
<div class="dw" style="left:401.50px;top:442px;transform:scaleX(1.0710);transform-origin:0 0;">the</div>
<div class="dw" style="left:441.22px;top:442px;transform:scaleX(1.0785);transform-origin:0 0;">command-line</div>
<div class="dw" style="left:608.08px;top:442px;transform:scaleX(1.1211);transform-origin:0 0;">in</div>
<div class="dw" style="left:637.20px;top:442px;transform:scaleX(1.0677);transform-origin:0 0;">the</div>
<div class="dw" style="left:676.73px;top:442px;transform:scaleX(1.0712);transform-origin:0 0;">same</div>
<div class="dw" style="left:741.30px;top:442px;transform:scaleX(0.9581);transform-origin:0 0;">way</div>
<div class="a" style="left:783px;top:289px;width:436px;height:406px;background:#e6e6e6"></div>
<div class="a" style="left:786px;top:289px;width:430px;height:20px;background:linear-gradient(to bottom,#787878 0.5px,#606060 1.5px,#505050 2.5px,#8a8a8a 3.5px,#9a9a9a 4.5px,#a8a8a8 5.5px,#c0c0c0 6.5px,#e0e0e0 7.5px,#f0f0f0 8.5px,#fff 9.5px,#f0f0f0 10.5px,#d0d0d0 11.5px,#c0c0c0 12.5px,#a8a8a8 13.5px,#989898 14.5px,#808080 15.5px,#686868 16.5px,#505050 17.5px,#444 18.5px,#2a2a2a 19.5px)"></div>
<div class="a" style="left:783px;top:289px;width:3px;height:406px;background:linear-gradient(to right,#8a8a8a 0.5px,#a0a0a0 1.5px,#8a8a8a 2.5px)"></div>
<div class="a" style="left:1216px;top:289px;width:3px;height:406px;background:linear-gradient(to right,#8a8a8a 0.5px,#555 1.5px,#000 2.5px)"></div>
<div class="a" style="left:783px;top:692px;width:436px;height:3px;background:linear-gradient(to bottom,#888 0.5px,#555 1.5px,#000 2.5px)"></div>
<div class="a" style="left:786px;top:309px;width:1px;height:383px;background:#f4f4f4"></div>
<div class="a" style="left:787px;top:292px;width:1px;height:15px;background:#f4f4f4"></div>
<div class="a" style="left:788px;top:292px;width:1px;height:15px;background:#5a5a5a"></div>
<svg class="a" style="left:790px;top:292px;" width="14" height="16" viewBox="0 0 14 16"><path d="M0.8 9.5 Q0.8 8 2.5 7 L6.5 3.5 Q8 2.8 9.5 4 L12.8 9.5 Q13.5 11 12 12.3 L7.5 15 Q5.5 16 4.3 14.5 Z" fill="#f0f0f0" stroke="#111" stroke-width="1"/>
<path d="M3 8.5 L7 5.5" stroke="#aab" stroke-width="0.7"/>
<path d="M4.5 11.5 L10 1 Q11.5 0 12.8 0.8 Q13.8 1.8 13.2 3 L7.5 13 Z" fill="#4a5898" stroke="#0a0a20" stroke-width="0.8"/>
<path d="M4.5 11.5 L7.5 13 L4.8 14.5 Z" fill="#d8d820"/></svg>
<svg class="a" style="left:806px;top:293px;" width="15" height="15" viewBox="0 0 15 15"><defs><radialGradient id="g813300" cx="0.5" cy="0.35" r="0.65"><stop offset="0" stop-color="#7d8da8"/><stop offset="1" stop-color="#2e3a52"/></radialGradient></defs><circle cx="7.5" cy="7.5" r="6.5" fill="url(#g813300)" stroke="#111" stroke-width="1"/><path d="M4.5 8.5 Q6 6 7.5 7.5 Q9 9 10.5 6.5" fill="none" stroke="#eee" stroke-width="1.6"/></svg>
<svg class="a" style="left:1169px;top:293px;" width="15" height="15" viewBox="0 0 15 15"><defs><radialGradient id="g1176300" cx="0.5" cy="0.35" r="0.65"><stop offset="0" stop-color="#7d8da8"/><stop offset="1" stop-color="#2e3a52"/></radialGradient></defs><circle cx="7.5" cy="7.5" r="6.5" fill="url(#g1176300)" stroke="#111" stroke-width="1"/><path d="M4.5 6 L7.5 9.5 L10.5 6" fill="none" stroke="#111" stroke-width="1.6"/><path d="M4.5 5.5 L10.5 5.5" stroke="#ccc" stroke-width="0.6"/></svg>
<svg class="a" style="left:1184px;top:293px;" width="15" height="15" viewBox="0 0 15 15"><defs><radialGradient id="g1191300" cx="0.5" cy="0.35" r="0.65"><stop offset="0" stop-color="#7d8da8"/><stop offset="1" stop-color="#2e3a52"/></radialGradient></defs><circle cx="7.5" cy="7.5" r="6.5" fill="url(#g1191300)" stroke="#111" stroke-width="1"/><path d="M4.5 8.5 L7.5 5 L10.5 8.5 Z" fill="#eee"/><path d="M4.5 10 L10.5 10" stroke="#111" stroke-width="1.4"/></svg>
<svg class="a" style="left:1199px;top:293px;" width="15" height="15" viewBox="0 0 15 15"><defs><radialGradient id="g1206300" cx="0.5" cy="0.35" r="0.65"><stop offset="0" stop-color="#7d8da8"/><stop offset="1" stop-color="#2e3a52"/></radialGradient></defs><circle cx="7.5" cy="7.5" r="6.5" fill="url(#g1206300)" stroke="#111" stroke-width="1"/><path d="M4.3 10.7 L10.7 4.3" stroke="#111" stroke-width="2.4"/><path d="M4.5 10.5 L10.5 4.5" stroke="#eee" stroke-width="1"/></svg>
<div class="a" style="left:1214px;top:292px;width:1px;height:15px;background:#5a5a5a"></div>
<div class="a" style="left:798px;top:321px;width:91px;height:27px;background:#e6e6e6;border:1px solid #555;box-shadow:inset 1px 1px 0 #fff,inset -1px -1px 0 #d0d0d0"></div>
<div class="a t" style="left:811px;top:328px;"><span class="u">N</span>ew Folder</div>
<div class="a" style="left:889px;top:321px;width:100px;height:27px;background:#e6e6e6;border:1px solid #555;box-shadow:inset 1px 1px 0 #fff,inset -1px -1px 0 #d0d0d0"></div>
<div class="a t" style="left:905px;top:328px;">De<span class="u">l</span>ete File</div>
<div class="a" style="left:895px;top:348px;width:120px;height:27px;background:#e6e6e6;border:1px solid #777;box-shadow:inset 1px 1px 0 #fff,inset -1px -1px 0 #d0d0d0"></div>
<div class="a t" style="left:903px;top:354px;">/home/peter/doc/</div>
<div class="a" style="left:798px;top:380px;width:406px;height:182px;background:#fff;border:1px solid #777"></div>
<div class="a" style="left:799px;top:381px;width:200px;height:26px;background:#e6e6e6;border-right:1px solid #888;border-bottom:1px solid #888;box-shadow:inset 1px 1px 0 #fff"></div>
<div class="a t" style="left:803px;top:387px;">Fol<span class="u">d</span>ers</div>
<div class="a t" style="left:803px;top:411px;">./</div>
<div class="a t" style="left:803px;top:433px;">../</div>
<div class="a" style="left:1190px;top:381px;width:14px;height:180px;background:#c4c4c4"></div>
<div class="a" style="left:1189px;top:380px;width:15px;height:15px;background:#e8e8e8;border:1px solid #5e5e5e;box-shadow:inset 1px 1px 0 #fff"></div>
<svg class="a" style="left:1192px;top:384px;" width="9" height="6" viewBox="0 0 9 6"><path d="M0.6 5.2 L4.5 0.8 L8.4 5.2 Q4.5 3.4 0.6 5.2 Z" fill="#1a1a1a" stroke="#1a1a1a" stroke-width="0.6" stroke-linejoin="round"/></svg>
<div class="a" style="left:1189px;top:394px;width:15px;height:31px;background:#e6e6e6;border:1px solid #5e5e5e;box-shadow:inset 1px 1px 0 #fff"></div>
<svg class="a" style="left:1192px;top:403px;" width="9" height="13" viewBox="0 0 9 13"><path d="M0.5 6 L7 0.5 M0.5 9 L7 3.5 M0.5 12 L7 6.5" stroke="#999" stroke-width="0.9"/></svg>
<div class="a" style="left:1189px;top:547px;width:15px;height:15px;background:#e8e8e8;border:1px solid #5e5e5e;box-shadow:inset 1px 1px 0 #fff"></div>
<svg class="a" style="left:1192px;top:552px;" width="9" height="6" viewBox="0 0 9 6"><path d="M0.6 0.8 L4.5 5.2 L8.4 0.8 Q4.5 2.6 0.6 0.8 Z" fill="#1a1a1a" stroke="#1a1a1a" stroke-width="0.6" stroke-linejoin="round"/></svg>
<div class="a t" style="left:798px;top:568px;">Save file as type:</div>
<div class="a" style="left:1150px;top:567px;width:54px;height:27px;background:#e6e6e6;border:1px solid #8a8a8a;box-shadow:inset 1px 1px 0 #fff,inset -1px -1px 0 #d0d0d0"></div>
<svg class="a" style="left:1193px;top:574px;" width="9" height="5" viewBox="0 0 9 5"><path d="M0.5 0.5 L4.5 4.5 L8.5 0.5 Z" fill="#222"/></svg>
<div class="a" style="left:1193px;top:582px;width:9px;height:1px;background:#aaa"></div>
<div class="a t" style="left:798px;top:596px;"><span class="u">S</span>election: /home/peter/doc/</div>
<div class="a" style="left:798px;top:615px;width:406px;height:23px;background:#fff;border:1px solid #999"></div>
<div class="a t" style="left:802px;top:619px;">para.dbk</div>
<div class="a" style="left:803px;top:645px;width:85px;height:30px;background:#e6e6e6;border:1px solid #555;box-shadow:inset 1px 1px 0 #fff,inset -1px -1px 0 #d0d0d0"></div>
<svg class="a" style="left:822px;top:651px;" width="19" height="18" viewBox="0 0 19 18"><rect x="0.8" y="0.8" width="17.4" height="16.4" rx="4" fill="#e0c020" stroke="#1a1a10" stroke-width="1.2"/><circle cx="9.5" cy="9" r="8.2" fill="#fafafa" stroke="#1a1010" stroke-width="1.1"/><path d="M5.37 2.39 A7.8 7.8 0 0 1 13.63 2.39 L11.35 6.03 A3.5 3.5 0 0 0 7.65 6.03 Z" fill="#d83818"/><path d="M16.11 4.87 A7.8 7.8 0 0 1 16.11 13.13 L12.47 10.85 A3.5 3.5 0 0 0 12.47 7.15 Z" fill="#d83818"/><path d="M13.63 15.61 A7.8 7.8 0 0 1 5.37 15.61 L7.65 11.97 A3.5 3.5 0 0 0 11.35 11.97 Z" fill="#d83818"/><path d="M2.89 13.13 A7.8 7.8 0 0 1 2.89 4.87 L6.53 7.15 A3.5 3.5 0 0 0 6.53 10.85 Z" fill="#d83818"/><circle cx="9.5" cy="9" r="3.3" fill="#e6e6e6" stroke="#222" stroke-width="1"/></svg>
<div class="a t" style="left:843px;top:653px;"><span class="u">H</span>elp</div>
<div class="a" style="left:1019px;top:645px;width:85px;height:30px;background:#e6e6e6;border:1px solid #555;box-shadow:inset 1px 1px 0 #fff,inset -1px -1px 0 #d0d0d0"></div>
<div class="a" style="left:1114px;top:645px;width:85px;height:30px;background:#e6e6e6;border:1px solid #000;box-shadow:inset 1px 1px 0 #fff,inset -1px -1px 0 #d0d0d0"></div>
<div class="a" style="left:957px;top:15px;width:233px;height:651px;background:#e6e6e6;border:1px solid #9a9a9a;box-shadow:inset 1px 1px 0 #fafafa"></div>
<div class="a" style="left:959px;top:568px;width:229px;height:24px;background:linear-gradient(to bottom,#3f5ea0,#5476c4);border:1px solid #22345e;box-shadow:inset 1px 1px 0 #8aa6e2"></div>
<div class="a t" style="left:966px;top:21px;">Automatically Detected</div>
<div class="a t" style="left:966px;top:45px;">AbiWord (.abw)</div>
<div class="a t" style="left:966px;top:69px;">AbiWord Template (.awt)</div>
<div class="a t" style="left:966px;top:93px;">Microsoft Word (.doc)</div>
<div class="a t" style="left:966px;top:117px;">HTML/XHTML (.html)</div>
<div class="a t" style="left:966px;top:141px;">Multipart HTML (.mht)</div>
<div class="a t" style="left:966px;top:165px;">Rich Text Format (.rtf)</div>
<div class="a t" style="left:966px;top:189px;">Rich Text Format for old apps (.rtf)</div>
<div class="a t" style="left:966px;top:213px;">Text (.txt, .text)</div>
<div class="a t" style="left:966px;top:237px;">Encoded Text (.txt, .text)</div>
<div class="a t" style="left:966px;top:261px;">GZipped AbiWord (.zabw)</div>
<div class="a t" style="left:966px;top:285px;">XSL-FO (.fo)</div>
<div class="a t" style="left:966px;top:309px;">WML (.wml)</div>
<div class="a t" style="left:966px;top:333px;">PassepartouToo (.xml2ps)</div>
<div class="a t" style="left:966px;top:357px;">PalmDoc (.pdb)</div>
<div class="a t" style="left:966px;top:381px;">OpenOffice Writer (.sxw)</div>
<div class="a t" style="left:966px;top:405px;">UNIX(tm) Nroff/Manual format (.nroff)</div>
<div class="a t" style="left:966px;top:429px;">MIF (.mif)</div>
<div class="a t" style="left:966px;top:453px;">LaTeX (.latex)</div>
<div class="a t" style="left:966px;top:477px;">KWord (.kwd)</div>
<div class="a t" style="left:966px;top:501px;">ISCII Text (.isc, .iscii)</div>
<div class="a t" style="left:966px;top:525px;">Newsgroup Formatted Text (.nws)</div>
<div class="a t" style="left:966px;top:549px;">Outlook Express Email (.eml)</div>
<div class="a t" style="left:966px;top:573px;color:#fff">DocBook (.dbk)</div>
<div class="a t" style="left:966px;top:597px;">Coquille (.coq)</div>
<div class="a t" style="left:966px;top:621px;">BZ2 AbiWord (.bzabw)</div>
<div class="a t" style="left:966px;top:645px;">Applix Words (.aw)</div>
</body></html>
